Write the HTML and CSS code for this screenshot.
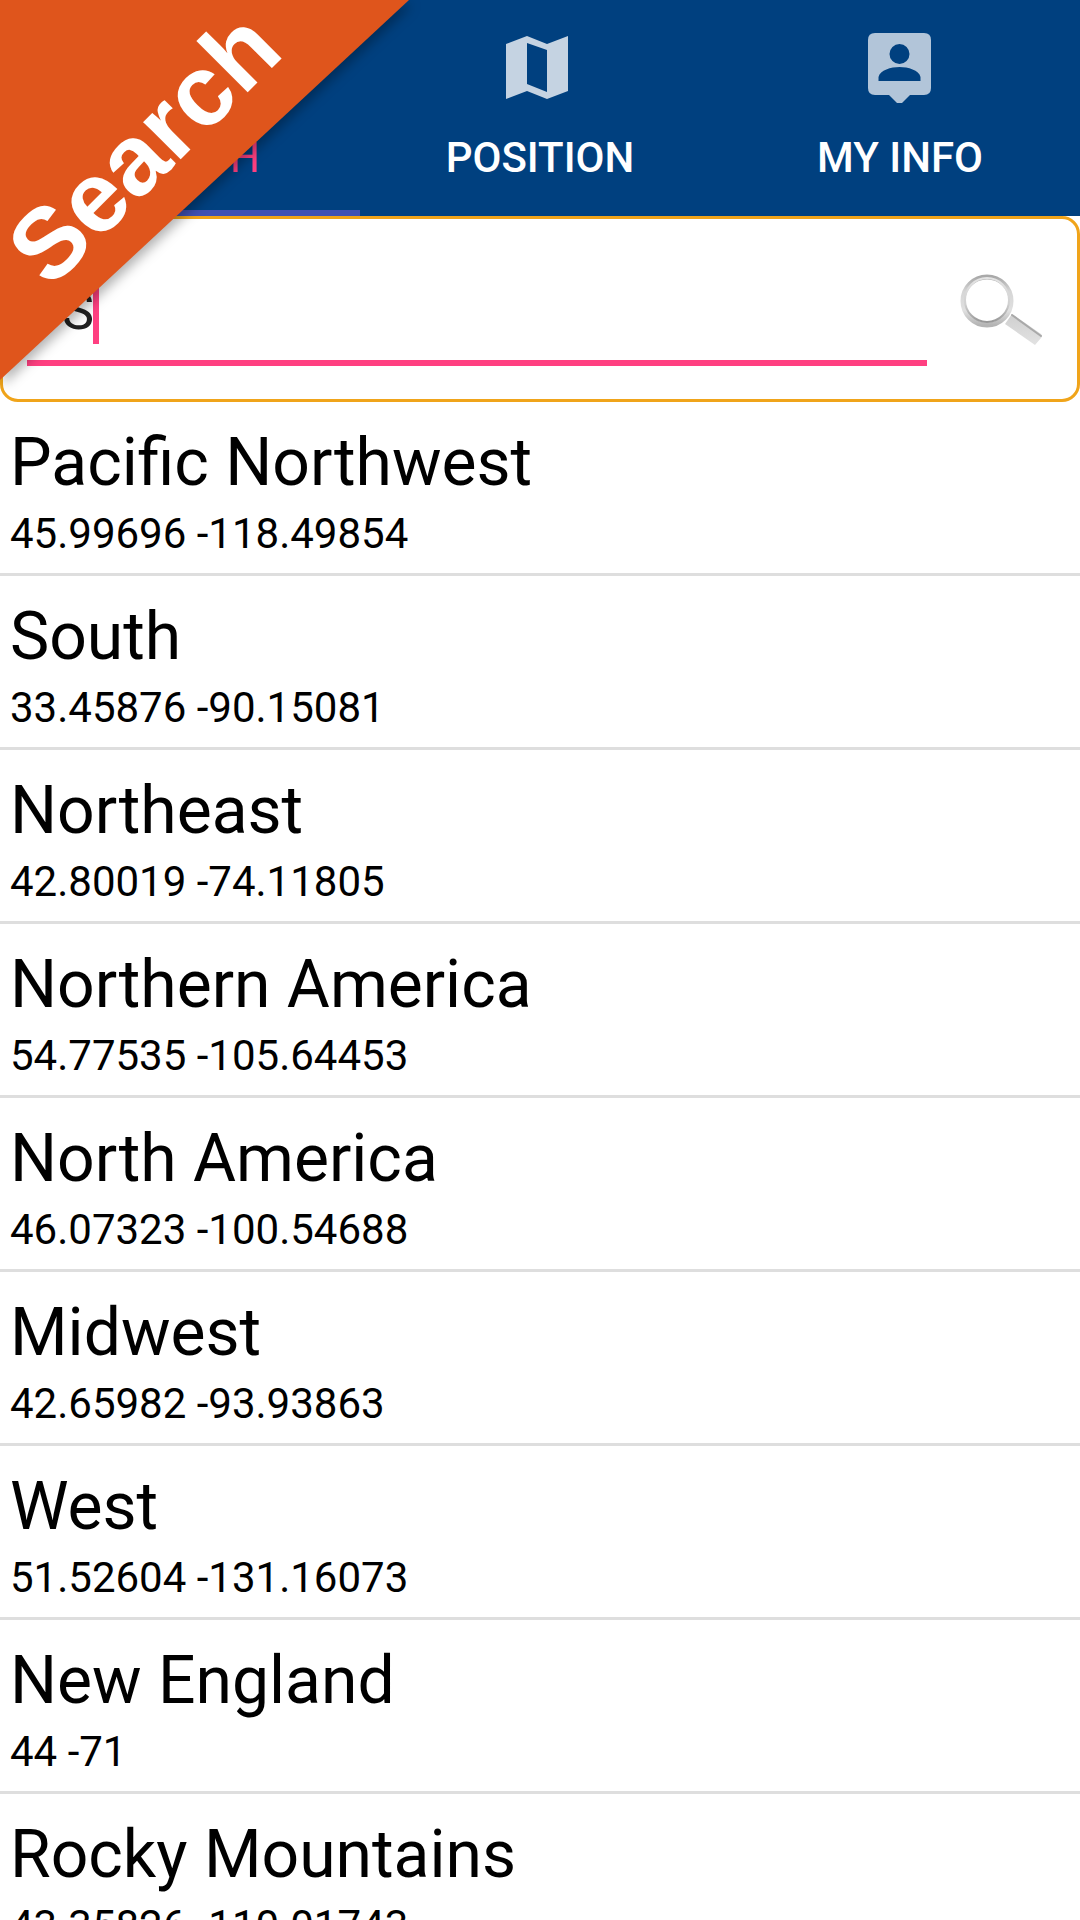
FILE: index.html
```html
<!DOCTYPE html>
<html lang="en">
<head>
<meta charset="utf-8">
<meta name="viewport" content="width=device-width, initial-scale=1">
<title>Search</title>
<link rel="stylesheet" href="styles.css">
</head>
<body>
<div class="ribbon"><div class="ribbon-shape"></div><strong class="ribbon-text">Search</strong></div>
<nav class="tabs">
  <a class="tab tab-active" href="#search">
    <svg class="tab-icon" viewBox="0 0 84 84" aria-hidden="true"><circle cx="34" cy="34" r="18" fill="none" stroke="#c5d3e2" stroke-width="7"/><path d="M48 48L70 70" stroke="#c5d3e2" stroke-width="8"/></svg>
    <span>SEARCH</span>
  </a>
  <a class="tab" href="#position">
    <svg class="tab-icon" viewBox="0 0 84 84" aria-hidden="true"><path fill="#c5d3e2" fill-rule="evenodd" d="M8 18L29 10L49 18L70 10V65L49 73L29 65L8 73ZM29 17V58L49 66V24Z"/></svg>
    <span>POSITION</span>
  </a>
  <a class="tab" href="#my-info">
    <svg class="tab-icon" viewBox="0 0 84 84" aria-hidden="true"><path fill="#b2c5d9" fill-rule="evenodd" d="M17 7H66Q73 7 73 14V62Q73 69 66 69H52L44 77H39L31 69H17Q10 69 10 62V14Q10 7 17 7ZM41.500 18A10 10 0 1 0 41.500 38A10 10 0 1 0 41.500 18ZM20.500 55H62.500V51C61 44 50 41 41.500 41S22 44 20.500 51Z"/></svg>
    <span>MY INFO</span>
  </a>
</nav>
<main>
  <form class="search">
    <input class="search-field" type="text" value="US" aria-label="Search for a place">
    <span class="caret"></span>
    <button class="search-button" type="button" aria-label="Search">
      <svg class="search-icon" viewBox="0 0 96 96" aria-hidden="true">
        <defs>
          <linearGradient id="ring" x1="0" y1="0" x2="0" y2="1"><stop offset="0" stop-color="#a9a9a9"/><stop offset=".3" stop-color="#d6d6d6"/><stop offset=".7" stop-color="#e0e0e0"/><stop offset="1" stop-color="#b4b4b4"/></linearGradient>
          <linearGradient id="inner" x1="0" y1="0" x2="0" y2="1"><stop offset="0" stop-color="#e4e4e4"/><stop offset=".6" stop-color="#d0d0d0"/><stop offset="1" stop-color="#969696"/></linearGradient>
          <linearGradient id="handle" x1="0" y1="0" x2="0" y2="1"><stop offset="0" stop-color="#cfcfcf"/><stop offset="1" stop-color="#e2e2e2"/></linearGradient>
        </defs>
        <circle cx="36" cy="39" r="24" fill="none" stroke="url(#ring)" stroke-width="5"/>
        <circle cx="36" cy="38" r="22" fill="none" stroke="url(#inner)" stroke-width="2"/>
        <path d="M61 52L90 72Q92 74 90 76L84 83L54 62Z" fill="url(#handle)"/>
        <path d="M61 53L90 74" stroke="#a9a9a9" stroke-width="2" stroke-linecap="round"/>
      </svg>
    </button>
  </form>
  <ul class="places">
    <li class="place"><h2>Pacific Northwest</h2><p>45.99696 -118.49854</p></li>
    <li class="place"><h2>South</h2><p>33.45876 -90.15081</p></li>
    <li class="place"><h2>Northeast</h2><p>42.80019 -74.11805</p></li>
    <li class="place"><h2>Northern America</h2><p>54.77535 -105.64453</p></li>
    <li class="place"><h2>North America</h2><p>46.07323 -100.54688</p></li>
    <li class="place"><h2>Midwest</h2><p>42.65982 -93.93863</p></li>
    <li class="place"><h2>West</h2><p>51.52604 -131.16073</p></li>
    <li class="place"><h2>New England</h2><p>44 -71</p></li>
    <li class="place"><h2>Rocky Mountains</h2><p>43.35826 -110.01743</p></li>
  </ul>
</main>
</body>
</html>
```
FILE: styles.css
```css
* { box-sizing: border-box; }
body {
  position: relative;
  height: 100vh;
  margin: 0;
  overflow: hidden;
  background: #fff;
  color: #000;
  font-family: Roboto, "Noto Sans", sans-serif;
}

/* Corner ribbon over the header */
.ribbon {
  position: absolute;
  z-index: 1;
  top: 0;
  left: 0;
  filter: drop-shadow(3px 5px 6px rgba(0, 0, 0, .3));
  pointer-events: none;
}
.ribbon-shape {
  width: 409px;
  height: 380px;
  background: #df551c;
  clip-path: polygon(0 0, 100% 0, 0 100%);
}
.ribbon-text {
  position: absolute;
  top: 205px;
  left: 50px;
  color: #fff;
  font: bold 100px/100px "Liberation Sans", Arial, sans-serif;
  transform: rotate(-45deg);
  transform-origin: 0 85px;
}

.tabs {
  display: grid;
  grid-template-columns: repeat(3, 1fr);
  background: #00407f;
}
.tab {
  display: flex;
  flex-direction: column;
  align-items: center;
  gap: 23px;
  padding: 26px 0 27px;
  border-bottom: 6px solid transparent;
  color: #fff;
  font-size: 42px;
  font-weight: 500;
  line-height: 50px;
  text-decoration: none;
}
.tab-active {
  border-color: #3f51b5;
  color: #ff4081;
  font-weight: 400;
}
.tab-icon { width: 84px; height: 84px; }

.search {
  position: relative;
  display: flex;
  align-items: flex-start;
  padding: 43px 30px 33px 24px;
  border: 3px solid #f0a41a;
  border-radius: 18px;
}
.search-field {
  flex: 1;
  min-width: 0;
  height: 104px;
  padding: 5px 0 6px;
  border: 0;
  border-bottom: 6px solid #ff4081;
  background: none;
  color: #212121;
  font: 54px/64px Roboto, sans-serif;
  outline: 0;
}
.caret {
  position: absolute;
  top: 62px;
  left: 90px;
  width: 6px;
  height: 63px;
  background: #ff4081;
}
.search-button {
  padding: 0;
  margin: 0 0 0 24px;
  border: 0;
  background: none;
}
.search-icon { display: block; width: 96px; height: 96px; }

.places { margin: 0; padding: 0; list-style: none; }
.place {
  padding: 22px 10px 7px;
  border-bottom: 3px solid #dedede;
}
.place h2 {
  margin: 0;
  font-size: 66px;
  font-weight: 400;
  line-height: 78px;
}
.place p {
  margin: 0;
  font-size: 42px;
  line-height: 64px;
}
```
